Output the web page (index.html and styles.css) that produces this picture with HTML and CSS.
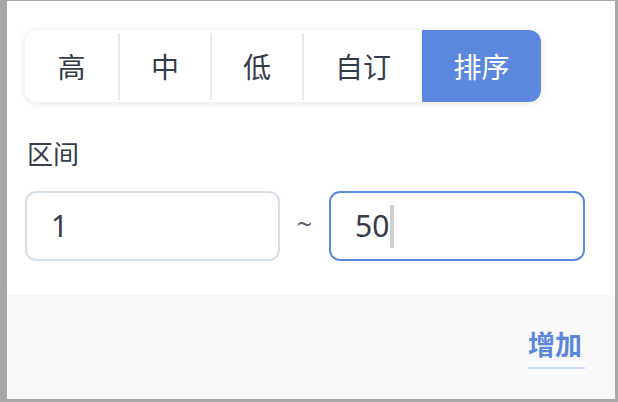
FILE: index.html
```html
<!DOCTYPE html>
<html lang="zh">
<head>
<meta charset="utf-8">
<link rel="stylesheet" href="styles.css">
</head>
<body>
<div class="panel">
  <div class="main">
    <div class="seg">
      <div class="opt first">高</div>
      <span class="sep"></span>
      <div class="opt">中</div>
      <span class="sep"></span>
      <div class="opt">低</div>
      <span class="sep"></span>
      <div class="opt wide">自订</div>
      <div class="opt active">排序</div>
    </div>
    <div class="label">区间</div>
    <div class="range">
      <div class="field"><span class="val">1</span></div>
      <span class="tilde">~</span>
      <div class="field focus"><span class="val">50</span><span class="caret"></span></div>
    </div>
  </div>
  <div class="footer">
    <a class="add">增加</a>
  </div>
</div>
</body>
</html>
```
FILE: styles.css
```css
html, body {
  margin: 0;
  padding: 0;
}
body {
  background: #a7a7a7;
  width: 618px;
  height: 402px;
  overflow: hidden;
  font-family: "Noto Sans", "Noto Sans CJK SC", sans-serif;
  color: #343b49;
}
.panel {
  margin: 1px 0 0 7px;
  width: 608px;
  height: 398px;
  background: #ffffff;
  display: flex;
  flex-direction: column;
}
.main {
  padding: 29px 30px 34px 18px;
}
.seg {
  display: flex;
  width: 516px;
  height: 72px;
  border-radius: 12px;
  background: #fff;
  box-shadow: 0 1px 7px rgba(0, 0, 0, 0.10);
}
.opt {
  flex: none;
  width: 90px;
  display: flex;
  align-items: center;
  justify-content: center;
  font-family: "Noto Sans CJK SC", sans-serif;
  font-size: 28px;
  color: #343b49;
}
.opt.first {
  width: 93px;
}
.opt.wide {
  width: 118px;
}
.sep {
  flex: none;
  width: 2px;
  margin: 3px 0 2px;
  background: #e4e9ef;
}
.opt.active {
  flex: 1;
  background: #5b87de;
  color: #ffffff;
  border-radius: 0 12px 12px 0;
}
.label {
  margin-top: 33px;
  font-family: "Noto Sans CJK SC", sans-serif;
  font-size: 26px;
  line-height: 36px;
  height: 36px;
  padding-left: 2px;
}
.range {
  margin-top: 20px;
  display: flex;
  align-items: center;
}
.field {
  flex: none;
  box-sizing: border-box;
  width: 255px;
  height: 70px;
  border: 2px solid #d5dfe8;
  border-radius: 11px;
  display: flex;
  align-items: center;
  padding-left: 24px;
  font-size: 30px;
}
.field.focus {
  width: 256px;
  border-color: #5b87de;
}
.val {
  line-height: 1;
}
.caret {
  display: inline-block;
  width: 4px;
  height: 43px;
  margin-left: 1px;
  background: #cfcfcf;
  border-radius: 1px;
}
.tilde {
  flex: 1;
  text-align: center;
  font-size: 27px;
  color: #5d6470;
  padding-bottom: 6px;
}
.footer {
  flex: 1;
  background: #f9f9f9;
  display: flex;
  justify-content: flex-end;
  align-items: flex-start;
  padding: 34px 30px 0 0;
}
.add {
  display: inline-block;
  font-family: "Noto Sans CJK SC", sans-serif;
  font-weight: 700;
  font-size: 27px;
  line-height: 30px;
  color: #5b87de;
  padding: 0 3px 8px 0;
  border-bottom: 2px solid #cddcf8;
}
```
